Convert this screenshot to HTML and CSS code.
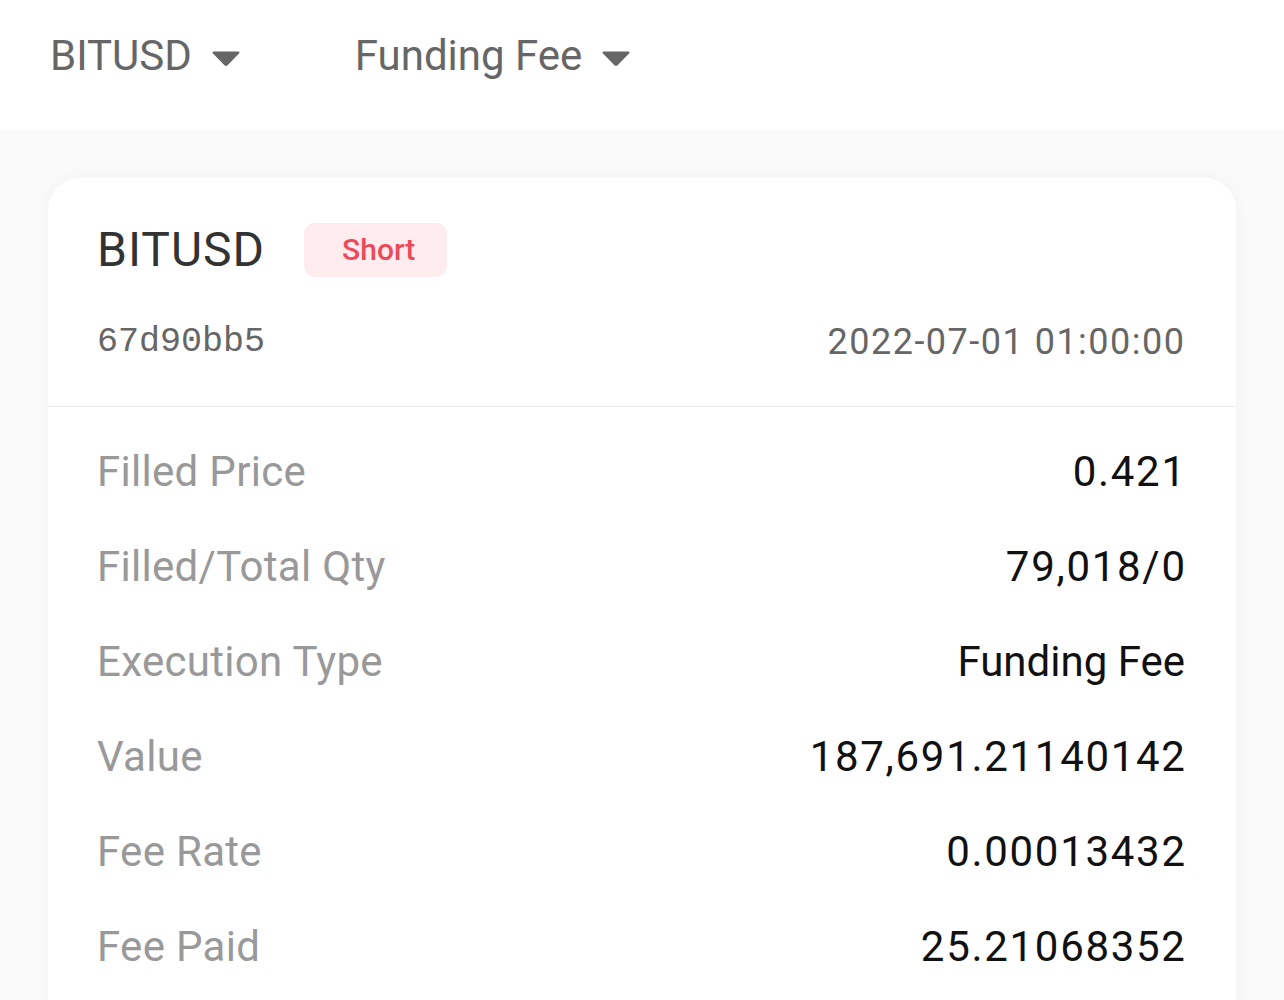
FILE: index.html
```html
<!DOCTYPE html>
<html lang="en">
<head>
<meta charset="utf-8">
<title>Funding Fee</title>
<link rel="stylesheet" href="styles.css">
</head>
<body>
<header class="topbar">
  <div class="dropdown">
    <span>BITUSD</span>
    <svg class="caret" width="30" height="17" viewBox="0 0 30 17"><path d="M3 1.5 H27 Q29.5 1.5 28 3.5 L16.6 15.2 Q15 16.8 13.4 15.2 L2 3.5 Q0.5 1.5 3 1.5 Z" fill="#666"/></svg>
  </div>
  <div class="dropdown">
    <span>Funding Fee</span>
    <svg class="caret" width="30" height="17" viewBox="0 0 30 17"><path d="M3 1.5 H27 Q29.5 1.5 28 3.5 L16.6 15.2 Q15 16.8 13.4 15.2 L2 3.5 Q0.5 1.5 3 1.5 Z" fill="#666"/></svg>
  </div>
</header>
<main class="main">
  <section class="card">
    <div class="card-head">
      <div class="title-row">
        <span class="title">BITUSD</span>
        <span class="badge">Short</span>
      </div>
      <div class="meta-row">
        <span class="order-id">67d90bb5</span>
        <span class="date">2022-07-01 01:00:00</span>
      </div>
    </div>
    <div class="card-body">
      <div class="row"><span class="label">Filled Price</span><span class="value num">0.421</span></div>
      <div class="row"><span class="label">Filled/Total Qty</span><span class="value num">79,018/0</span></div>
      <div class="row"><span class="label">Execution Type</span><span class="value">Funding Fee</span></div>
      <div class="row"><span class="label">Value</span><span class="value num">187,691.21140142</span></div>
      <div class="row"><span class="label">Fee Rate</span><span class="value num">0.00013432</span></div>
      <div class="row"><span class="label">Fee Paid</span><span class="value num">25.21068352</span></div>
    </div>
  </section>
</main>
</body>
</html>
```

FILE: styles.css
```css
html, body {
  margin: 0;
  padding: 0;
}
body {
  background: #fafafa;
  font-family: Roboto, "Noto Sans", sans-serif;
  overflow: hidden;
  height: 1000px;
}
.topbar {
  height: 130px;
  box-sizing: border-box;
  background: #ffffff;
  display: flex;
  align-items: flex-start;
  padding: 35px 0 0 50px;
  gap: 114px;
}
.dropdown {
  display: flex;
  align-items: center;
  gap: 19px;
  font-size: 42px;
  line-height: 42px;
  color: #666666;
}
.caret {
  display: block;
  margin-top: 4px;
}
.main {
  padding: 48px 48px 0;
}
.card {
  background: #ffffff;
  border-radius: 32px;
  box-shadow: 0 0 18px rgba(0, 0, 0, 0.035);
  overflow: hidden;
  height: 860px;
}
.card-head {
  padding: 45px 52px 44px 49px;
  border-bottom: 1px solid #e9e9e9;
}
.title-row {
  display: flex;
  align-items: center;
  height: 54px;
  gap: 39px;
}
.title {
  font-size: 48px;
  line-height: 54px;
  color: #333333;
  letter-spacing: 1px;
}
.badge {
  height: 54px;
  box-sizing: border-box;
  padding: 0 32px 0 38px;
  border-radius: 11px;
  background: #feecee;
  color: #eb4b59;
  font-size: 30px;
  font-weight: 500;
  line-height: 54px;
}
.meta-row {
  margin-top: 45px;
  display: flex;
  justify-content: space-between;
  align-items: center;
  height: 40px;
}
.order-id {
  font-family: "Liberation Mono", "DejaVu Sans Mono", monospace;
  font-size: 35px;
  line-height: 40px;
  color: #666666;
}
.date {
  font-size: 36px;
  line-height: 40px;
  color: #666666;
  letter-spacing: 1.5px;
  margin-right: -1.5px;
}
.card-body {
  padding: 17px 51px 0 49px;
}
.row {
  display: flex;
  justify-content: space-between;
  align-items: center;
  height: 95px;
  font-size: 42px;
  line-height: 95px;
}
.label {
  color: #999999;
  letter-spacing: 0.3px;
}
.value {
  color: #111111;
}
.value.num {
  letter-spacing: 1.7px;
  margin-right: -1.7px;
}
```
